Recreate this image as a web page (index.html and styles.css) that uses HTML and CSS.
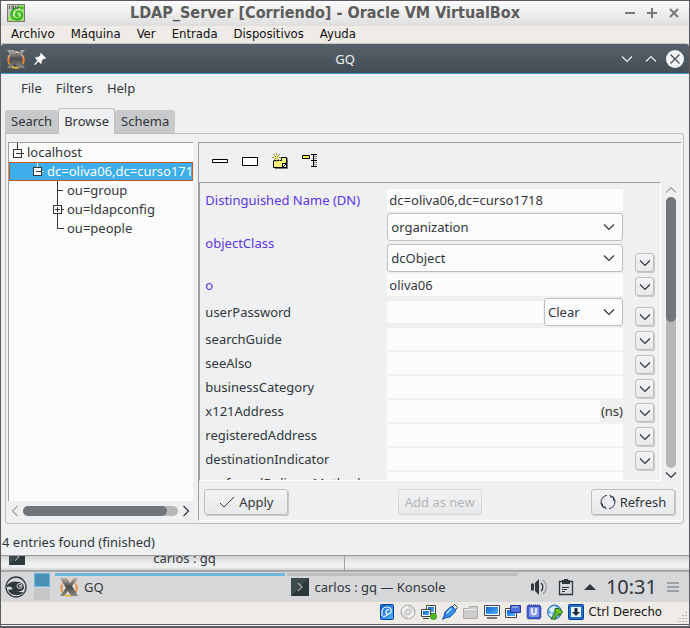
FILE: index.html
```html
<!DOCTYPE html>
<html lang="es">
<head>
<meta charset="utf-8">
<title>LDAP_Server [Corriendo] - Oracle VM VirtualBox</title>
<link rel="stylesheet" href="styles.css">
</head>
<body>
<svg width="0" height="0" class="defs" aria-hidden="true">
  <defs>
    <linearGradient id="metal" x1="0" y1="0" x2="0" y2="1"><stop offset="0" stop-color="#b4b2ae"/><stop offset=".5" stop-color="#4c4a48"/><stop offset="1" stop-color="#8d8a84"/></linearGradient>
    <linearGradient id="ring" x1="0" y1="0" x2="0" y2="1"><stop offset="0" stop-color="#f0cdb4"/><stop offset=".5" stop-color="#f07c28"/><stop offset="1" stop-color="#e8bd2c"/></linearGradient>
    <linearGradient id="blue" x1="0" y1="0" x2="1" y2="1"><stop offset="0" stop-color="#0b5ed0"/><stop offset="1" stop-color="#55b4ff"/></linearGradient>
    <symbol id="chev" viewBox="0 0 12 8"><path d="M1 1.5l5 5 5-5" fill="none" stroke="currentColor" stroke-width="1.2"/></symbol>
    <symbol id="xlogo" viewBox="0 0 20 20"><circle cx="10" cy="11" r="7.800" fill="none" stroke="url(#ring)" stroke-width="1.800"/><path d="M1 1h7l3 5 4-5h4l-6 8 6 10h-7l-3-5-4 5H1l6-8z" fill="url(#metal)"/></symbol>
    <symbol id="konsole" viewBox="0 0 18 18"><path fill="#2c3738" d="M0 0h18v18H0z"/><path fill="#3d4b4b" d="M0 0h18L0 18z"/><path d="M7 5l4 4-4 4" fill="none" stroke="#a5adad" stroke-width="1.200"/></symbol>
  </defs>
</svg>
<div class="vm">
  <header class="vm-title">
    <svg class="vm-logo" width="18" height="18" viewBox="0 0 18 18"><path fill="#a9dc78" stroke="#74766c" d="M.5.5h17v17H.5z"/><path fill="#c8c9bd" d="M1 1h10v4L5 6 4 12H1z"/><path d="M16.500 4C10 2.500 4 6 4.500 11c.5 5 8 6 10 2 1.500-4-2-6.500-4.500-4.500-2 2-.5 4 1.500 3.500" fill="none" stroke="#35b822" stroke-width="2.400"/><path d="M13 4.500C8.500 4.500 6 8 7 12M10.500 9c2-1 3.500 1 2.500 3" fill="none" stroke="#e6fbd0"/><path d="M2.500 2v3M5 2h1.500v3H5zM8.500 2v2H11M11 1.500V5" fill="none" stroke="#44444a" stroke-width=".8"/></svg>
    <h1>LDAP_Server [Corriendo] - Oracle VM VirtualBox</h1>
    <div class="vm-controls">
      <button aria-label="Minimizar"><svg width="10" height="10" viewBox="0 0 10 10"><path d="M0 5h10" stroke="currentColor" stroke-width="2"/></svg></button>
      <button aria-label="Maximizar"><svg width="10" height="10" viewBox="0 0 10 10"><path d="M0 5h10M5 0v10" stroke="currentColor" stroke-width="2"/></svg></button>
      <button aria-label="Cerrar"><svg width="10" height="10" viewBox="0 0 10 10"><path d="M1 1l8 8M9 1L1 9" stroke="currentColor" stroke-width="2"/></svg></button>
    </div>
  </header>
  <nav class="vm-menu"><button>Archivo</button><button>Máquina</button><button>Ver</button><button>Entrada</button><button>Dispositivos</button><button>Ayuda</button></nav>

  <main class="gq">
    <header class="gq-title">
      <div class="gq-side">
        <svg width="20" height="20"><use href="#xlogo"/></svg>
        <svg width="12" height="12" viewBox="0 0 12 12"><path fill="#fff" d="M7 0l5 5-1 1-1-.5-2.500 2.500.3 2L7 11 4.500 8.500 1 12 0 11.500 3.500 7.500 1 5l1-1 2 .2L6.500 2 6 1z"/></svg>
      </div>
      <h2>GQ</h2>
      <div class="gq-side gq-controls">
        <button aria-label="Minimize"><svg width="12" height="8"><use href="#chev"/></svg></button>
        <button aria-label="Maximize"><svg class="flip" width="12" height="8"><use href="#chev"/></svg></button>
        <button aria-label="Close"><svg width="18" height="18" viewBox="0 0 18 18"><circle cx="9" cy="9" r="9" fill="#f4f5f6"/><path d="M4.500 4.500l9 9M13.500 4.500l-9 9" stroke="#475057" stroke-width="1.300"/></svg></button>
      </div>
    </header>
    <nav class="gq-menu"><button>File</button><button>Filters</button><button>Help</button></nav>
    <div class="tabs" role="tablist"><button role="tab">Search</button><button role="tab" class="active" aria-selected="true">Browse</button><button role="tab">Schema</button></div>
    <section class="page">
      <div class="tree-pane">
        <ul class="tree" role="tree">
          <li role="treeitem"><svg width="18" height="19" viewBox="0 0 18 19"><path d="M8.500 0v6M13 10.500h2M6.500 10.500h5M4.500 6.500h8v8h-8z"/></svg>localhost</li>
          <li role="treeitem" class="selected" aria-selected="true"><svg width="38" height="19" viewBox="0 0 38 19"><path class="light" d="M28.500 0v5M33 9.500h2"/><path class="box" d="M24.500 5.500h8v8h-8z"/><path d="M26.500 9.500h5"/></svg>dc=oliva06,dc=curso1718</li>
          <li role="treeitem"><svg width="58" height="19" viewBox="0 0 58 19"><path d="M48.500 0v19M48 9.500h6"/></svg>ou=group</li>
          <li role="treeitem"><svg width="58" height="19" viewBox="0 0 58 19"><path d="M48.500 0v5M48.500 14v5M53 9.500h2M46 9.500h5M48.500 7v5M44.500 5.500h8v8h-8z"/></svg>ou=ldapconfig</li>
          <li role="treeitem"><svg width="58" height="19" viewBox="0 0 58 19"><path d="M48.500 0v9.500h6"/></svg>ou=people</li>
        </ul>
        <div class="hscroll">
          <svg class="left dim" width="12" height="8"><use href="#chev"/></svg>
          <div class="trough"><div class="thumb"></div></div>
          <svg class="right" width="12" height="8"><use href="#chev"/></svg>
        </div>
      </div>

      <div class="entry-pane">
        <div class="toolbar">
          <button aria-label="Hide status"><svg width="16" height="16" viewBox="0 0 16 16"><path d="M.5 6.500h15v3H.5z" fill="#fff" stroke="#000"/></svg></button>
          <button aria-label="Show status"><svg width="16" height="16" viewBox="0 0 16 16"><path d="M.5 4.500h15v8H.5z" fill="#fff" stroke="#000"/></svg></button>
          <button aria-label="New entry"><svg width="16" height="16" viewBox="0 0 16 16"><path d="M3 15.500h12.500V5" fill="none" stroke="#777"/><path d="M1.500 7.500h8v-3h5v10h-13z" fill="#fbf67a" stroke="#000"/><path d="M10.500 10.500h4v4h-4zM11 14l3-3" fill="#fff" stroke="#000"/><path d="M4.500 0v9M0 4.500h9M1 1l7 7M8 1L1 8" stroke="#8b8a55"/><path d="M4.500 2v5M2 4.500h5" stroke="#fff352"/></svg></button>
          <button aria-label="Tree view"><svg width="16" height="16" viewBox="0 0 16 16"><path d="M.5 2.500h7v3h-7z" fill="#fbf34a" stroke="#000"/><path d="M9 1.500h6M9 7.500h6M9 13.500h6M11.500 1v13" stroke="#000"/><path d="M12 3.500h3M12 5.500h3M12 9.500h3M12 11.500h3" stroke="#888"/></svg></button>
        </div>
        <div class="scroll-area">
          <form class="attributes">
            <label class="req" for="dn">Distinguished Name (DN)</label><div class="field"><input id="dn" value="dc=oliva06,dc=curso1718"></div><span></span>
            <label class="req" for="oc1">objectClass</label>
            <div class="stack">
              <div class="combo"><select id="oc1"><option>organization</option></select><svg width="12" height="8"><use href="#chev"/></svg></div>
              <div class="combo"><select aria-label="objectClass 2"><option>dcObject</option></select><svg width="12" height="8"><use href="#chev"/></svg></div>
            </div><button type="button" class="more" aria-label="More objectClass"><svg width="12" height="8"><use href="#chev"/></svg></button>
            <label class="req" for="o">o</label><div class="field"><input id="o" value="oliva06"></div><button type="button" class="more" aria-label="More o"><svg width="12" height="8"><use href="#chev"/></svg></button>
            <label for="pw">userPassword</label><div class="field tall"><input id="pw"><div class="combo short"><select aria-label="Password encoding"><option>Clear</option></select><svg width="12" height="8"><use href="#chev"/></svg></div></div><button type="button" class="more" aria-label="More userPassword"><svg width="12" height="8"><use href="#chev"/></svg></button>
            <label for="sg">searchGuide</label><div class="field"><input id="sg"></div><button type="button" class="more" aria-label="More searchGuide"><svg width="12" height="8"><use href="#chev"/></svg></button>
            <label for="sa">seeAlso</label><div class="field"><input id="sa"></div><button type="button" class="more" aria-label="More seeAlso"><svg width="12" height="8"><use href="#chev"/></svg></button>
            <label for="bc">businessCategory</label><div class="field"><input id="bc"></div><button type="button" class="more" aria-label="More businessCategory"><svg width="12" height="8"><use href="#chev"/></svg></button>
            <label for="xa">x121Address</label><div class="field"><input id="xa"><span class="unit">(ns)</span></div><button type="button" class="more" aria-label="More x121Address"><svg width="12" height="8"><use href="#chev"/></svg></button>
            <label for="ra">registeredAddress</label><div class="field"><input id="ra"></div><button type="button" class="more" aria-label="More registeredAddress"><svg width="12" height="8"><use href="#chev"/></svg></button>
            <label for="di">destinationIndicator</label><div class="field"><input id="di"></div><button type="button" class="more" aria-label="More destinationIndicator"><svg width="12" height="8"><use href="#chev"/></svg></button>
            <label for="pd">preferredDeliveryMethod</label><div class="field"><input id="pd"></div><span></span>
          </form>
          <div class="vscroll">
            <svg class="flip dim" width="12" height="8"><use href="#chev"/></svg>
            <div class="trough"><div class="thumb"></div></div>
            <svg width="12" height="8"><use href="#chev"/></svg>
          </div>
        </div>
        <div class="actions">
          <button><svg width="16" height="16" viewBox="0 0 16 16"><path d="M1 9l4 4L15 3" fill="none" stroke="currentColor"/></svg>Apply</button>
          <button disabled>Add as new</button>
          <button><svg width="16" height="16" viewBox="0 0 16 16"><path d="M2.500 12.500A7 7 0 0 1 7 1.200M9.500 1.200A7 7 0 0 1 14.800 7M13.500 3.500A7 7 0 0 1 9 14.800M6.500 14.800A7 7 0 0 1 1.200 9M2.500 9.500v3.500H6M13.500 6.500V3H10" fill="none" stroke="currentColor"/></svg>Refresh</button>
        </div>
      </div>
    </section>
    <footer class="gq-status">4 entries found (finished)</footer>
  </main>

  <div class="behind"><div class="behind-window"><svg width="16" height="16"><use href="#konsole"/></svg><span>carlos : gq</span></div></div>

  <div class="taskbar">
    <button class="start" aria-label="Menu"><svg width="22" height="22" viewBox="0 0 22 22"><circle cx="11" cy="11" r="10" fill="none" stroke="#303940" stroke-width="1.300"/><path d="M2 9c4-4 8-4 11-3 4 0 6 3 6 6-1 3-5 4-8 3 2 1 5 1 7 1-4 5-12 4-15-2l5-1c-2-3-4-3-6-2z" fill="#2f383d"/><circle cx="14.500" cy="10" r="2.500" fill="none" stroke="#d9dbdc"/><circle cx="15" cy="10" r="1" fill="#d9dbdc"/></svg></button>
    <div class="pager"><span class="current"></span><span></span></div>
    <button class="task on"><svg width="20" height="20"><use href="#xlogo"/></svg>GQ</button>
    <button class="task"><svg width="18" height="18"><use href="#konsole"/></svg>carlos : gq — Konsole</button>
    <div class="tray">
      <svg width="18" height="18" viewBox="0 0 18 18"><path d="M1 5.500h3v7H1zM5 5l4-4v16l-4-4z" fill="#2f383d"/><path d="M11 5c2.500 2 2.500 6 0 8" fill="none" stroke="#2f383d" stroke-width="1.300"/><path d="M13 2c4.500 4 4.500 10 0 14" fill="none" stroke="#9ea2a5" stroke-width="1.300"/></svg>
      <svg width="16" height="18" viewBox="0 0 16 18"><path d="M1.500 3.500h13v13h-13z" fill="none" stroke="#2f383d" stroke-width="1.300"/><path d="M4 2h2V1h4v1h2v4H4z" fill="#2f383d"/><path d="M4 9.500h7M4 11.500h5M4 13.500h3" stroke="#2f383d"/></svg>
      <svg width="12" height="6" viewBox="0 0 12 6"><path d="M0 6l6-6 6 6z" fill="#2f383d"/></svg>
      <time>10:31</time>
      <svg width="12" height="10" viewBox="0 0 12 10"><path d="M0 1h12M0 5h12M0 9h12" stroke="#8b8e91" stroke-width="1.500"/></svg>
    </div>
  </div>

  <footer class="vm-status">
    <svg width="16" height="16" viewBox="0 0 16 16"><rect x="1.500" y=".5" width="13" height="15" rx="1" fill="url(#blue)" stroke="#0b3f9c"/><path d="M3 12c-1-6 1-9 5-9 3 0 5 2 4 5-1 2-4 3-5 1s1-4 3-3M4 13c2-1 4-1 5-3" fill="none" stroke="#fff" stroke-width="1.200"/></svg>
    <svg width="16" height="16" viewBox="0 0 16 16"><circle cx="8" cy="8" r="7" fill="#ddd" stroke="#a9a9a9"/><path d="M3 8a5 5 0 0 1 5-5M13 8a5 5 0 0 1-5 5" fill="none" stroke="#f7f7f7" stroke-width="2"/><circle cx="8" cy="8" r="2" fill="#fff" stroke="#aaa"/></svg>
    <svg width="16" height="16" viewBox="0 0 16 16"><path d="M5.500 1.500h9v8h-9z" fill="#fff" stroke="#444"/><path d="M7 3h6v5H7z" fill="url(#blue)"/><path d="M.5 5.500h9v7h-9z" fill="#fff" stroke="#444"/><path d="M2 7h6v4H2z" fill="url(#blue)"/><path d="M2 14.500h6" stroke="#444"/><circle cx="12.500" cy="12.500" r="3.200" fill="#4cb81d" stroke="#318318" stroke-width=".5"/></svg>
    <svg width="16" height="16" viewBox="0 0 16 16"><path d="M9.500 3.500l3-3 3 3-3 3.500z" fill="#fff" stroke="#335"/><path d="M3 8l6-5.500q4.500.5 4.500 5L8 13l-5 1-2.500 1.500L2 12z" fill="url(#blue)" stroke="#1457ad"/><path d="M4.500 9.500l5-5" stroke="#c5eaff" stroke-width="1.500"/></svg>
    <svg width="16" height="16" viewBox="0 0 16 16"><path d="M.5 14.500v-10h5l1-2h8v12z" fill="#ccc" stroke="#aaa"/><path d="M1 5.500h13" stroke="#eee"/></svg>
    <svg width="16" height="16" viewBox="0 0 16 16"><path d="M.5 1.500h15v10H.5z" fill="#fff" stroke="#446"/><path d="M2 3h12v7H2z" fill="url(#blue)"/><path d="M3 14h10" stroke="#777" stroke-width="2"/></svg>
    <svg width="16" height="16" viewBox="0 0 16 16"><path d="M.5 4.500h11v9H.5z" fill="#fff" stroke="#444"/><path d="M2 6h8v6H2z" fill="url(#blue)"/><path d="M5.500 1.500h10v7h-10z" fill="#4f70e0" stroke="#2535a0"/><path d="M7 3h6" stroke="#b8cfff"/></svg>
    <svg width="16" height="16" viewBox="0 0 16 16"><rect x="1" y="1" width="14" height="14" rx="2" fill="#4057c8" stroke="#2539a2" stroke-dasharray="1 1"/><rect x="3" y="3" width="10" height="10" rx="1" fill="#8299ec"/><path d="M6 4v5q2 3 4 0V4" fill="none" stroke="#fff" stroke-width="1.500"/></svg>
    <svg width="16" height="16" viewBox="0 0 16 16"><circle cx="7.500" cy="8" r="7" fill="#72b6e7" stroke="#336caa"/><path d="M2 5l5-3 3 2-5 5z" fill="#dff5ff"/><path d="M8 4.500h4l3.500 3.500-3.500 3.500V9.500L8.500 13v2H4l4-5z" fill="#6cc822" stroke="#27630e"/><path d="M1.500 10.500l3-1.500.5 4z" fill="#fff"/></svg>
    <svg width="16" height="16" viewBox="0 0 16 16"><rect x=".5" y=".5" width="15" height="15" rx="1" fill="#1d70ca" stroke="#0d428f"/><path d="M3 3h10v10H3z" fill="#eaf5ff"/><path d="M6.500 4h3v4H12l-4 4-4-4h2.500z" fill="#202b38"/></svg>
    <span>Ctrl Derecho</span>
    <svg class="grip" width="10" height="10" viewBox="0 0 10 10"><path d="M9 0v10M6 3v7M3 6v4M0 9v1" stroke="#aaa5a0" stroke-width="1.500" stroke-dasharray="1 2"/></svg>
  </footer>
</div>
</body>
</html>
```

FILE: styles.css
```css
* { box-sizing: border-box; }
body { margin: 0; font-family: "Noto Sans", sans-serif; font-size: 13px; line-height: 18px; color: #31363b; }
.defs { position: absolute; }
h1, h2, ul { margin: 0; padding: 0; }
button, input, select { font: inherit; color: inherit; margin: 0; padding: 0; border: 0; background: none; border-radius: 0; }
svg { display: block; flex: none; }
.flip { transform: rotate(180deg); }
.left { transform: rotate(90deg); }
.right { transform: rotate(-90deg); }
.dim { opacity: .4; }

.vm { display: flex; flex-direction: column; height: 100vh; border: 1px solid #5c5a5e; border-bottom-width: 2px; background: #efebe7; }
.vm-title { display: flex; align-items: center; height: 25px; flex: none; padding: 0 10px 2px 6px; background: linear-gradient(#fcfcfc, #dedede); color: #5c5c5c; }
.vm-title h1 { flex: 1; text-align: center; font: bold 16px/23px "DejaVu Sans Condensed", "DejaVu Sans", sans-serif; white-space: nowrap; }
.vm-controls { display: flex; gap: 12px; color: #777; }
.vm-menu { display: flex; gap: 16px; flex: none; height: 18px; padding-left: 10px; font: 13px/16px "DejaVu Sans Condensed", "DejaVu Sans", sans-serif; color: #111; border-bottom: 1px solid #c9c6c3; }
.vm-menu button { height: 16px; }

.gq { display: flex; flex-direction: column; flex: 1; min-height: 0; background: #eff0f1; border-bottom: 1px solid #999b9d; border-radius: 4px 4px 0 0; }
.gq-title { display: flex; align-items: center; flex: none; height: 30px; padding: 0 5px; background: linear-gradient(#566069, #444e56); color: #eff0f1; border-bottom: 1px solid #3d9fd3; border-radius: 3px 3px 0 0; }
.gq-title h2 { font-size: 13px; font-weight: 400; }
.gq-side { display: flex; align-items: center; flex: 1; gap: 8px; }
.gq-controls { justify-content: flex-end; gap: 12px; }
.gq-controls button:last-child { margin-left: -3px; }
.gq-menu { display: flex; gap: 14px; flex: none; height: 34px; padding-left: 20px; align-items: center; padding-bottom: 6px; }
.tabs { display: flex; align-items: flex-end; flex: none; padding-left: 4px; position: relative; margin-bottom: -1px; height: 26px; }
.tabs button { height: 24px; padding: 0 6px 1px; background: #c8c9ca; border-radius: 3px 3px 0 0; border-bottom: 1px solid #bcbebf; }
.tabs button.active { height: 26px; padding: 0 5px 2px; background: #eff0f1; border: 1px solid #bcbebf; border-bottom: 0; }

.page { display: flex; gap: 5px; flex: 1; min-height: 0; margin: 0 5px 0 4px; padding: 8px 1px 2px 2px; border: 1px solid #bcbebf; border-radius: 0 3px 3px 3px; }
.tree-pane { display: flex; flex-direction: column; width: 27.5%; flex: none; }
.tree { flex: 1; min-height: 0; overflow: hidden; list-style: none; background: #fcfcfc; border: 1px solid #9d9fa1; border-width: 1px 0 0 1px; }
.tree li { display: flex; align-items: center; height: 19px; white-space: nowrap; overflow: hidden; line-height: 19px; }
.tree svg path { fill: none; stroke: #31363b; shape-rendering: crispEdges; }
.tree .selected { background: #3daee9; outline: 1px solid #c05a1c; outline-offset: -1px; color: #fcfcfc; }
.tree .selected .light { stroke: #fcfcfc; }
.tree .selected .box { fill: #fcfcfc; }
.hscroll { display: flex; align-items: center; height: 20px; gap: 2px; padding: 0 1px; }
.hscroll .trough { flex: 1; height: 10px; }
.trough { background: #b5b7b9; border-radius: 5px; }
.thumb { background: #727679; border-radius: 5px; }
.hscroll .thumb { width: 93%; height: 100%; }

.entry-pane { display: flex; flex-direction: column; flex: 1; min-width: 0; border: 1px solid #fff; border-top-color: #9d9fa1; border-left-color: #9d9fa1; }
.toolbar { display: flex; gap: 14px; align-items: center; flex: none; height: 39px; padding: 0 0 3px 13px; }
.scroll-area { display: flex; flex: 1; min-height: 0; }
.attributes { flex: 1; min-width: 0; overflow: hidden; display: grid; grid-template-columns: 182px minmax(0, 1fr) 20px; row-gap: 2px; align-content: start; align-items: center; padding: 6px 5px 0 5px; border: 1px solid #fff; border-top-color: #9d9fa1; border-left-color: #9d9fa1; }
.attributes .req { color: #5b35e8; }
.attributes label { white-space: nowrap; }
.field, .stack { margin-right: 12px; }
.field { display: flex; align-items: center; gap: 1px; height: 22px; }
.field.tall { height: 28px; }
.field input { flex: 1; min-width: 0; width: 0; height: 22px; padding: 0 2px; background: #fcfcfc; }
.stack { display: flex; flex-direction: column; gap: 3px; }
.combo { position: relative; height: 28px; }
.combo select { appearance: none; width: 100%; height: 28px; padding: 0 3px; background: #fcfcfc; border: 1px solid #bcbebf; border-radius: 3px; }
.combo svg { position: absolute; right: 8px; top: 10px; pointer-events: none; }
.short { width: 79px; flex: none; }
.more { display: flex; align-items: center; justify-content: center; align-self: end; width: 19px; height: 19px; border: 1px solid #bcbebf; border-radius: 3px; background: linear-gradient(#f2f3f4, #e8e9ea); box-shadow: 1px 1px 0 #c6c8c9; }
.vscroll { display: flex; flex-direction: column; align-items: center; justify-content: space-between; width: 20px; padding: 4px 0 2px; gap: 3px; }
.vscroll .trough { width: 10px; flex: 1; }
.vscroll .thumb { height: 46%; }
.actions { display: flex; justify-content: space-between; align-items: center; flex: none; height: 39px; padding: 3px 6px 0 5px; }
.actions button { display: flex; align-items: center; justify-content: center; gap: 4px; width: 84px; height: 26px; border: 1px solid #bcbebf; border-radius: 3px; background: linear-gradient(#f2f3f4, #e8e9ea); box-shadow: 1px 1px 0 #c6c8c9; white-space: nowrap; }
.actions button:disabled { color: #b3b5b7; border-color: #d5d6d7; box-shadow: none; }
.gq-status { flex: none; height: 31px; padding: 9px 1px 0; }

.behind { flex: none; height: 16px; overflow: hidden; background: linear-gradient(#cfd0d1, #eff0f1 50%, #eff0f1 80%, #cfd0d1); border-bottom: 2px solid #a4a6a8; }
.behind-window { display: flex; align-items: flex-end; width: 50%; height: 14px; padding-left: 8px; padding-bottom: 3px; border-right: 1px solid #a0a2a4; }
.behind-window svg { margin-bottom: 2px; }
.behind-window span { flex: 1; text-align: center; }

.taskbar { display: flex; flex: none; align-items: stretch; height: 30px; padding-left: 4px; background: #d6d7d9; }
.start { padding-right: 7px; }
.pager { display: flex; flex-direction: column; gap: 1px; width: 16px; margin: 1px 5px 2px 0; }
.pager span { flex: 1; background: #c5c6c8; }
.pager .current { background: #4a90b6; border: 1px solid #6cb6dc; }
.task { display: flex; align-items: center; gap: 5px; flex: 1; margin: 1px 2px 0 0; padding: 0 4px 4px; border-top: 3px solid #bdbfc0; white-space: nowrap; }
.task.on { border-color: #6cb8e2; }
.tray { display: flex; align-items: center; gap: 10px; flex: none; padding: 0 10px 0 10px; }
.tray time { font-size: 20px; line-height: 28px; }

.vm-status { display: flex; align-items: center; justify-content: flex-end; gap: 5px; flex: none; height: 24px; padding: 0 2px 3px 0; border-bottom: 1px solid #f8f8f8; box-shadow: inset 0 -1px #5c5a5e; font: 13px/18px "DejaVu Sans Condensed", "DejaVu Sans", sans-serif; color: #111; }
.vm-status .grip { align-self: flex-end; margin-left: 10px; }
```
